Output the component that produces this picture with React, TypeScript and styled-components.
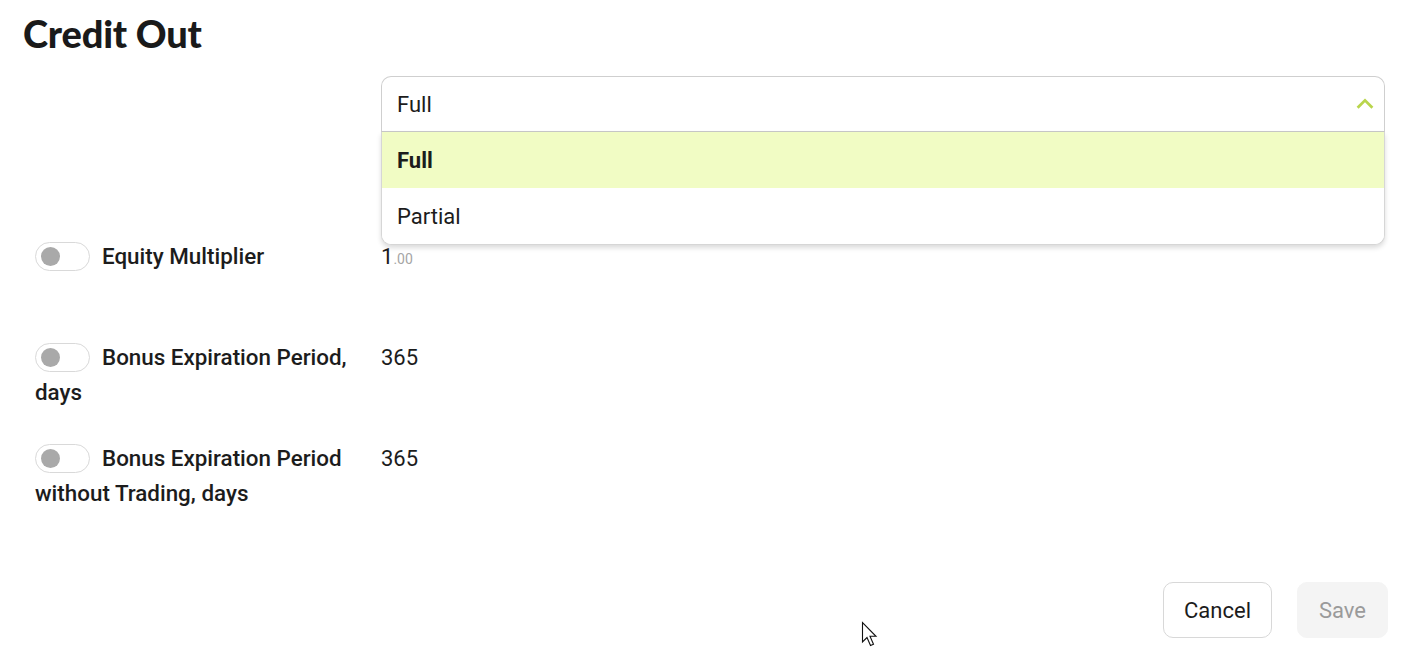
import React from "react";
import styled, { createGlobalStyle } from "styled-components";

const Global = createGlobalStyle`
  html, body { margin: 0; padding: 0; background: #fff; }
  body { font-family: Roboto, "Noto Sans", Arial, sans-serif; color: #1c1c1c; }
  * { box-sizing: border-box; }
`;

const Page = styled.div`
  position: relative;
  width: 1415px;
  height: 659px;
  padding: 10px 27px 0 23px;
  display: flex;
  flex-direction: column;
`;

const Title = styled.h1`
  margin: 0;
  font-family: Lato, "Open Sans", sans-serif;
  font-weight: 900;
  font-size: 38px;
  line-height: 46px;
  letter-spacing: -0.2px;
  color: #1a1a1a;
`;

const Form = styled.div`
  display: grid;
  grid-template-columns: 346px 1fr;
  padding-left: 12px;
  margin-top: 20px;
`;

const SelectWrap = styled.div`
  grid-column: 2;
  position: relative;
  height: 56px;
  margin-right: 3px;
  margin-bottom: 107px;
`;

const SelectBox = styled.div`
  height: 56px;
  border: 1px solid #cfcfcf;
  border-radius: 10px 10px 0 0;
  border-bottom-color: #c8c8c8;
  display: flex;
  align-items: center;
  justify-content: space-between;
  padding: 0 8px 0 15px;
  font-size: 22px;
  color: #1c1c1c;
`;

const Menu = styled.ul`
  position: absolute;
  left: 0;
  right: 0;
  top: 56px;
  margin: 0;
  padding: 0;
  list-style: none;
  background: #fff;
  border: 1px solid #d6d6d6;
  border-top: none;
  border-radius: 0 0 10px 10px;
  box-shadow: 0 3px 5px rgba(0, 0, 0, 0.14);
  overflow: hidden;
  z-index: 2;
`;

const Option = styled.li<{ $active?: boolean }>`
  height: 56px;
  display: flex;
  align-items: center;
  padding-left: 15px;
  font-size: 22px;
  font-weight: ${(p) => (p.$active ? 700 : 400)};
  background: ${(p) => (p.$active ? "#f1fcc4" : "#fff")};
  color: #1c1c1c;
`;

const Label = styled.div`
  font-size: 22.4px;
  font-weight: 500;
  line-height: 35px;
  color: #1c1c1c;
  padding-right: 10px;
  min-height: 101px;
`;

const Toggle = styled.span`
  display: inline-block;
  vertical-align: middle;
  position: relative;
  width: 55px;
  height: 29px;
  border: 1px solid #d9d9d9;
  border-radius: 15px;
  margin-right: 12px;
  margin-top: -3px;
  background: #fff;
  &::after {
    content: "";
    position: absolute;
    left: 5px;
    top: 4px;
    width: 19px;
    height: 19px;
    border-radius: 50%;
    background: #a9a9a9;
  }
`;

const Value = styled.div`
  font-size: 22px;
  line-height: 35px;
  color: #1c1c1c;
`;

const Decimals = styled.span`
  font-size: 14px;
  color: #a5a5a5;
`;

const Footer = styled.div`
  margin-top: auto;
  margin-bottom: 21px;
  display: flex;
  justify-content: flex-end;
  gap: 25px;
`;

const Button = styled.button<{ $disabled?: boolean }>`
  height: 56px;
  padding: 0 20px;
  border-radius: 10px;
  font-family: Roboto, Arial, sans-serif;
  font-size: 22px;
  border: 1px solid ${(p) => (p.$disabled ? "#f4f4f4" : "#d8d8d8")};
  background: ${(p) => (p.$disabled ? "#f4f4f4" : "#fff")};
  color: ${(p) => (p.$disabled ? "#9a9a9a" : "#1c1c1c")};
  min-width: 91px;
`;

const Cursor = styled.svg`
  position: absolute;
  left: 861px;
  top: 621px;
`;

const rows = [
  { label: "Equity Multiplier", value: <>1<Decimals>.00</Decimals></> },
  { label: "Bonus Expiration Period, days", value: "365" },
  { label: "Bonus Expiration Period without Trading, days", value: "365" },
];

export default function App() {
  return (
    <>
      <Global />
      <Page>
        <Title>Credit Out</Title>
        <Form>
          <SelectWrap>
            <SelectBox>
              <span>Full</span>
              <svg width="22" height="22" viewBox="0 0 24 24" fill="none" stroke="#b9d54c" strokeWidth="3" strokeLinecap="square">
                <path d="M5 15l7-7 7 7" />
              </svg>
            </SelectBox>
            <Menu>
              <Option $active>Full</Option>
              <Option>Partial</Option>
            </Menu>
          </SelectWrap>
          {rows.map((r) => (
            <React.Fragment key={r.label}>
              <Label>
                <Toggle />
                {r.label}
              </Label>
              <Value>{r.value}</Value>
            </React.Fragment>
          ))}
        </Form>
        <Footer>
          <Button>Cancel</Button>
          <Button $disabled>Save</Button>
        </Footer>
        <Cursor width="20" height="30" viewBox="0 0 20 30">
          <path d="M1.5 1.5 L1.5 21 L6 16.5 L9.5 24.5 L12.5 23.2 L9 15.3 L15 15.3 Z" fill="#fff" stroke="#111" strokeWidth="1.1" strokeLinejoin="miter" />
        </Cursor>
      </Page>
    </>
  );
}
